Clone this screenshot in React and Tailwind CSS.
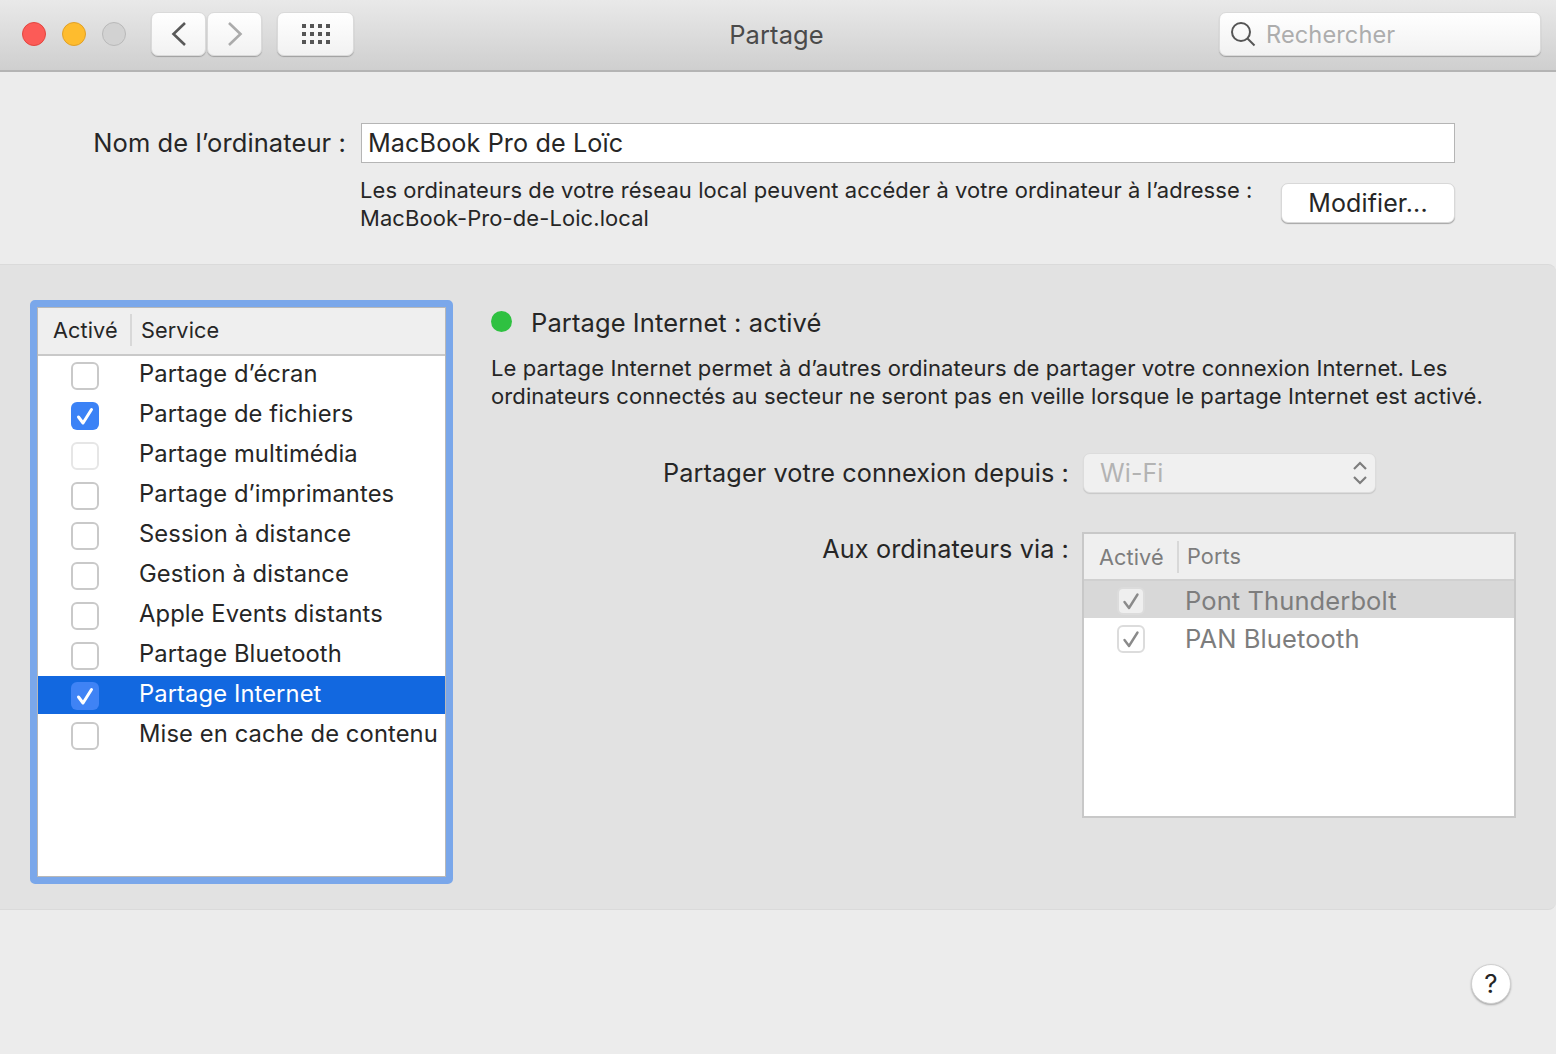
const SERVICES = [
  { name: 'Partage d’écran' },
  { name: 'Partage de fichiers', on: true },
  { name: 'Partage multimédia', faint: true },
  { name: 'Partage d’imprimantes' },
  { name: 'Session à distance' },
  { name: 'Gestion à distance' },
  { name: 'Apple Events distants' },
  { name: 'Partage Bluetooth' },
  { name: 'Partage Internet', on: true, selected: true },
  { name: 'Mise en cache de contenu' },
]

function Tick({ className }) {
  return (
    <svg viewBox="0 0 28 28" className={className} fill="none" stroke="currentColor" strokeLinecap="round" strokeLinejoin="round">
      <path d="M7.5 15 L12 21 L20.5 7.5" />
    </svg>
  )
}

function ServiceBox({ on, faint, selected }) {
  if (on) {
    return (
      <div className={`w-7 h-7 rounded-[6px] ${selected ? 'bg-[#3f83f5]' : 'bg-[#3b82f6]'} text-white`}>
        <Tick className="w-7 h-7 stroke-[3]" />
      </div>
    )
  }
  return (
    <div className={`w-7 h-7 rounded-[6px] bg-white border-2 ${faint ? 'border-[#e6e6e6]' : 'border-[#c9c9c9]'}`} />
  )
}

function ServiceRow({ name, on, faint, selected }) {
  return (
    <div className={`h-10 ${selected ? 'pb-[2px]' : ''}`}>
      <div className={`flex items-center w-full h-full ${selected ? 'bg-[#1268e0] text-white' : 'text-[#262626]'}`}>
        <div className={`w-[101px] pl-[33px] shrink-0 ${selected ? 'translate-y-px' : ''}`}>
          <ServiceBox on={on} faint={faint} selected={selected} />
        </div>
        <span className={`whitespace-nowrap ${selected ? '-translate-y-px' : '-translate-y-[2px]'}`}>{name}</span>
      </div>
    </div>
  )
}

function PortRow({ name, shaded }) {
  return (
    <div className={shaded ? 'h-[37px] pt-[6px] bg-[#d8d8d8]' : 'h-[38px] pt-[7px] bg-white'}>
      <div className="flex items-center h-7">
        <div className="w-[101px] pl-[33px] shrink-0">
          <div className="w-7 h-7 rounded-[6px] bg-white/60 border-2 border-[#dcdcdc] text-[#8a8a8a] flex items-center justify-center">
            <svg viewBox="0 0 28 28" className="w-7 h-7 shrink-0 stroke-[2.4]" fill="none" stroke="currentColor" strokeLinecap="round" strokeLinejoin="round">
              <path d="M7.5 15 L12 21 L20.5 7.5" />
            </svg>
          </div>
        </div>
        <span className="text-[25.5px] text-[#7d7d7d] whitespace-nowrap">{name}</span>
      </div>
    </div>
  )
}

export default function App() {
  return (
    <div className="w-[1556px] h-[1054px] overflow-hidden flex flex-col bg-[#ececec] font-['Inter',sans-serif] text-[#262626] tracking-[0.1px]">
      {/* toolbar */}
      <header className="h-[72px] shrink-0 flex items-center pl-[22px] pr-[15px] pb-[2px] bg-gradient-to-b from-[#e9e9e9] to-[#cfcfcf] border-b-2 border-[#b4b4b4]">
        <div className="flex items-center gap-4 shrink-0">
          <div className="w-6 h-6 rounded-full bg-[#fc5b57] border border-[#e2463f]" />
          <div className="w-6 h-6 rounded-full bg-[#febc2e] border border-[#e0a028]" />
          <div className="w-6 h-6 rounded-full bg-[#d2d2d2] border border-[#b9b9b9]" />
        </div>
        <div className="flex ml-[25px] gap-px shrink-0">
          <button className="w-[55px] h-[44px] flex items-center justify-center rounded-[7px] bg-gradient-to-b from-white to-[#f2f2f2] border border-[#dadada] shadow-[0_1px_1px_rgba(0,0,0,0.25)]">
            <svg viewBox="0 0 16 26" className="w-4 h-[26px] text-[#595959]" fill="none" stroke="currentColor" strokeWidth="2.6">
              <path d="M14 2 L2.5 13 L14 24" />
            </svg>
          </button>
          <button className="w-[55px] h-[44px] flex items-center justify-center rounded-[7px] bg-gradient-to-b from-white to-[#f2f2f2] border border-[#dadada] shadow-[0_1px_1px_rgba(0,0,0,0.25)]">
            <svg viewBox="0 0 16 26" className="w-4 h-[26px] text-[#ababab]" fill="none" stroke="currentColor" strokeWidth="2.6">
              <path d="M2 2 L13.5 13 L2 24" />
            </svg>
          </button>
        </div>
        <button className="w-[77px] h-[44px] ml-[15px] shrink-0 flex items-center justify-center rounded-[7px] bg-gradient-to-b from-white to-[#f2f2f2] border border-[#dadada] shadow-[0_1px_1px_rgba(0,0,0,0.25)]">
          <div className="grid grid-cols-4 gap-x-[4px] gap-y-[4px]">
            {Array.from({ length: 12 }).map((_, i) => (
              <div key={i} className="w-1 h-1 bg-[#555555]" />
            ))}
          </div>
        </button>
        <div className="flex-1 text-center text-[25.5px] text-[#4a4a4a] mr-[20px] pt-[3px]">Partage</div>
        <div className="w-[322px] h-[44px] shrink-0 flex items-center pl-[10px] rounded-[7px] bg-gradient-to-b from-white to-[#f2f2f2] border border-[#dadada] shadow-[0_1px_1px_rgba(0,0,0,0.25)]">
          <svg viewBox="0 0 26 26" className="w-[26px] h-[26px] text-[#555555]" fill="none" stroke="currentColor" strokeWidth="2">
            <circle cx="11" cy="11" r="9" />
            <path d="M17.5 17.5 L24.5 24.5" />
          </svg>
          <span className="ml-[10px] pt-px text-[23.6px] text-[#adadad]">Rechercher</span>
        </div>
      </header>

      {/* computer name */}
      <section className="h-[192px] shrink-0 pt-[51px] pr-[101px] flex flex-col items-end">
        <div className="flex items-center">
          <label className="text-[25.5px] mr-[15px] whitespace-nowrap pt-px">Nom de l’ordinateur :</label>
          <div className="w-[1094px] h-[40px] flex items-center pl-[6px] pt-px bg-white border border-[#b5b5b5] text-[25.2px]">
            MacBook Pro de Loïc
          </div>
        </div>
        <div className="w-[1095px] flex justify-between mt-[13px]">
          <p className="text-[21.95px] leading-[28px] whitespace-nowrap">
            Les ordinateurs de votre réseau local peuvent accéder à votre ordinateur à l’adresse :
            <br />
            MacBook-Pro-de-Loic.local
          </p>
          <button className="w-[174px] h-[40px] mt-[7px] pt-px rounded-[7px] bg-white border border-[#d8d8d8] shadow-[0_1px_1px_rgba(0,0,0,0.3)] text-[25px]">
            Modifier...
          </button>
        </div>
      </section>

      {/* services panel */}
      <section className="h-[646px] shrink-0 flex bg-[#e2e2e2] border-y border-[#dadada] rounded-r-[8px] pt-[35px] pl-[30px]">
        <div className="w-[423px] h-[584px] shrink-0 rounded-[5px] border-[7px] border-[#7aa7ea] flex flex-col bg-white shadow-[inset_0_0_0_1px_#b8b8b8]">
          <div className="h-[48px] shrink-0 flex items-center pb-[2px] bg-[#efefef] border-b-2 border-[#c9c9c9] text-[21.7px] mx-px mt-px">
            <span className="w-[94px] h-[32px] pl-[15px] leading-[32px] border-r-2 border-[#d8d8d8] shrink-0">Activé</span>
            <span className="pl-[9px]">Service</span>
          </div>
          <div className="text-[23.75px] mx-px overflow-hidden">
            {SERVICES.map((s) => (
              <ServiceRow key={s.name} {...s} />
            ))}
          </div>
        </div>

        <div className="flex-1 pl-[38px] pr-[40px] pt-[8px]">
          <div className="flex items-center h-[30px]">
            <div className="w-[21px] h-[21px] rounded-full bg-[#2fc141] -mt-[3px]" />
            <span className="ml-[19px] text-[25.5px]">Partage Internet : activé</span>
          </div>
          <p className="mt-[16px] text-[22px] leading-[28px] whitespace-nowrap">
            Le partage Internet permet à d’autres ordinateurs de partager votre connexion Internet. Les
            <br />
            ordinateurs connectés au secteur ne seront pas en veille lorsque le partage Internet est activé.
          </p>
          <div className="flex items-center mt-[43px]">
            <label className="w-[578px] pt-px text-right text-[25.25px] whitespace-nowrap">Partager votre connexion depuis :</label>
            <div className="ml-[14px] w-[293px] h-[40px] flex items-center justify-between pl-[16px] pr-[7px] rounded-[7px] bg-[#f0f0f0] border border-[#dcdcdc] shadow-[0_1px_1px_rgba(0,0,0,0.12)]">
              <span className="text-[25px] pt-px text-[#b3b3b3]">Wi-Fi</span>
              <svg viewBox="0 0 16 26" className="w-4 h-[26px] text-[#7d7d7d]" fill="none" stroke="currentColor" strokeWidth="2.2">
                <path d="M2 9 L8 3 L14 9" />
                <path d="M2 17 L8 23 L14 17" />
              </svg>
            </div>
          </div>
          <div className="flex items-start mt-[39px]">
            <label className="w-[578px] -mt-px text-right text-[25.25px] whitespace-nowrap">Aux ordinateurs via :</label>
            <div className="ml-[13px] w-[434px] h-[286px] bg-white border-2 border-[#c8c8c8]">
              <div className="h-[47px] flex items-center bg-[#efefef] border-b-2 border-[#d0d0d0] text-[21.7px] text-[#7d7d7d]">
                <span className="w-[95px] h-[32px] pl-[15px] leading-[32px] border-r-2 border-[#d8d8d8] shrink-0">Activé</span>
                <span className="pl-[8px]">Ports</span>
              </div>
              <PortRow name="Pont Thunderbolt" shaded />
              <PortRow name="PAN Bluetooth" />
            </div>
          </div>
        </div>
      </section>

      {/* help */}
      <footer className="flex-1 flex justify-end pt-[54px] pr-[45px]">
        <button className="w-10 h-10 rounded-full bg-white border border-[#d0d0d0] shadow-[0_1px_2px_rgba(0,0,0,0.3)] text-[26px] leading-none">
          ?
        </button>
      </footer>
    </div>
  )
}
